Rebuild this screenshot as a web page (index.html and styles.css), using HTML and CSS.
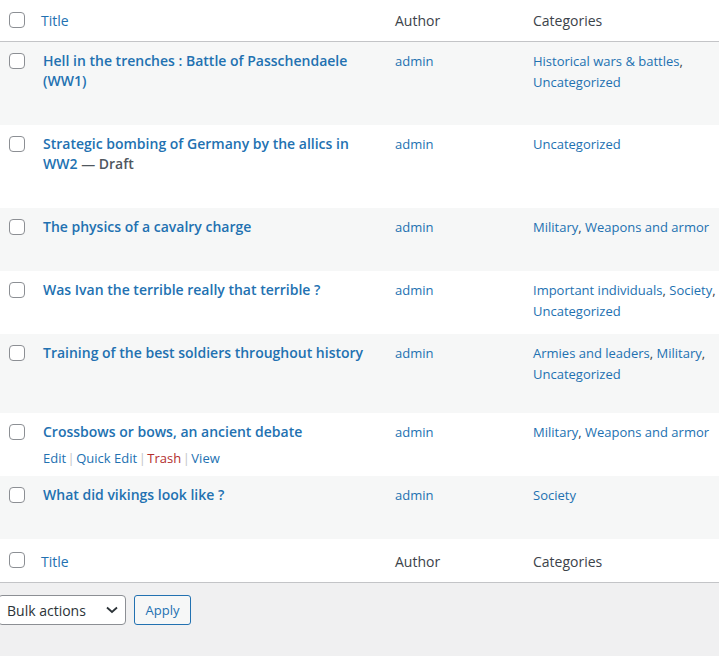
FILE: index.html
```html
<!DOCTYPE html>
<html lang="en">
<head>
<meta charset="utf-8">
<title>Posts</title>
<link rel="stylesheet" href="styles.css">
</head>
<body>
<div class="page">
  <table class="posts">
    <colgroup>
      <col class="col-check">
      <col class="col-title">
      <col class="col-author">
      <col class="col-cats">
    </colgroup>
    <thead>
      <tr class="head-row">
        <td class="check"><span class="cb"></span></td>
        <th class="sortable"><a href="#">Title</a></th>
        <th>Author</th>
        <th>Categories</th>
      </tr>
    </thead>
    <tbody>
      <tr class="alt">
        <td class="check"><span class="cb"></span></td>
        <td class="title-cell"><strong class="row-title">Hell in the trenches : Battle of Passchendaele (WW1)</strong><div class="row-actions hidden">Edit | Quick Edit | Trash | View</div></td>
        <td><a href="#">admin</a></td>
        <td><a href="#">Historical wars &amp; battles</a>, <a href="#">Uncategorized</a></td>
      </tr>
      <tr>
        <td class="check"><span class="cb"></span></td>
        <td class="title-cell"><strong class="row-title">Strategic bombing of Germany by the allics in WW2</strong> <span class="state">— Draft</span><div class="row-actions hidden">Edit | Quick Edit | Trash | Preview</div></td>
        <td><a href="#">admin</a></td>
        <td><a href="#">Uncategorized</a></td>
      </tr>
      <tr class="alt">
        <td class="check"><span class="cb"></span></td>
        <td class="title-cell"><strong class="row-title">The physics of a cavalry charge</strong><div class="row-actions hidden">Edit | Quick Edit | Trash | View</div></td>
        <td><a href="#">admin</a></td>
        <td><a href="#">Military</a>, <a href="#">Weapons and armor</a></td>
      </tr>
      <tr>
        <td class="check"><span class="cb"></span></td>
        <td class="title-cell"><strong class="row-title">Was Ivan the terrible really that terrible ?</strong><div class="row-actions hidden">Edit | Quick Edit | Trash | View</div></td>
        <td><a href="#">admin</a></td>
        <td><a href="#">Important individuals</a>, <a href="#">Society</a>, <a href="#">Uncategorized</a></td>
      </tr>
      <tr class="alt">
        <td class="check"><span class="cb"></span></td>
        <td class="title-cell"><strong class="row-title">Training of the best soldiers throughout history</strong><div class="row-actions hidden tall">Edit | Quick Edit | Trash | View</div></td>
        <td><a href="#">admin</a></td>
        <td><a href="#">Armies and leaders</a>, <a href="#">Military</a>, <a href="#">Uncategorized</a></td>
      </tr>
      <tr>
        <td class="check"><span class="cb"></span></td>
        <td class="title-cell"><strong class="row-title">Crossbows or bows, an ancient debate</strong><div class="row-actions"><a href="#">Edit</a><span class="sep">|</span><a href="#">Quick Edit</a><span class="sep">|</span><a href="#" class="trash">Trash</a><span class="sep">|</span><a href="#">View</a></div></td>
        <td><a href="#">admin</a></td>
        <td><a href="#">Military</a>, <a href="#">Weapons and armor</a></td>
      </tr>
      <tr class="alt">
        <td class="check"><span class="cb"></span></td>
        <td class="title-cell"><strong class="row-title">What did vikings look like ?</strong><div class="row-actions hidden">Edit | Quick Edit | Trash | View</div></td>
        <td><a href="#">admin</a></td>
        <td><a href="#">Society</a></td>
      </tr>
    </tbody>
    <tfoot>
      <tr class="foot-row">
        <td class="check"><span class="cb"></span></td>
        <th class="sortable"><a href="#">Title</a></th>
        <th>Author</th>
        <th>Categories</th>
      </tr>
    </tfoot>
  </table>
  <div class="tablenav">
    <div class="select">
      <span>Bulk actions</span>
      <svg class="chev" width="12" height="8" viewBox="0 0 12 8"><path d="M1 1.5 L6 6 L11 1.5" fill="none" stroke="#2c3338" stroke-width="1.8"/></svg>
    </div>
    <button class="apply">Apply</button>
  </div>
</div>
</body>
</html>
```

FILE: styles.css
```css
html, body {
  margin: 0;
  padding: 0;
}
body {
  background: #f0f0f1;
  font-family: "Open Sans", "Noto Sans", sans-serif;
  color: #3c434a;
  width: 719px;
  height: 656px;
  overflow: hidden;
}
a {
  color: #2271b1;
  text-decoration: none;
}
.posts {
  border-collapse: collapse;
  table-layout: fixed;
  width: 733px;
  background: #fff;
  font-size: 13px;
}
.col-check { width: 33px; }
.col-title { width: 352px; }
.col-author { width: 138px; }
.col-cats { width: 210px; }

.head-row,
.foot-row {
  border-bottom: 1px solid #c3c4c7;
}
.head-row th, .foot-row th {
  text-align: left;
  font-weight: 400;
  font-size: 14px;
  line-height: 25px;
  padding: 8px 10px;
  color: #3c434a;
}
.foot-row th {
  padding: 10px 10px 8px;
}
.sortable a {
  margin-left: -2px;
}
.head-row .check { padding: 12px 0 0 9px; }
.foot-row .check { padding: 13px 0 0 9px; }
td.check {
  vertical-align: top;
}

tbody td {
  vertical-align: top;
  padding: 9px 10px 8px;
  line-height: 21px;
}
tbody td.check {
  padding: 11px 0 0 9px;
}
tbody tr { background: #fff; }
tbody tr.alt { background: #f6f7f7; }

.cb {
  display: block;
  width: 14px;
  height: 14px;
  border: 1px solid #8c8f94;
  border-radius: 4px;
  background: #fff;
}
.title-cell {
  line-height: 20px;
  font-size: 14px;
}
.row-title {
  font-weight: 600;
  color: #2271b1;
}
.state {
  font-weight: 600;
  color: #50575e;
}
.row-actions {
  font-size: 13px;
  line-height: 20px;
  padding-top: 6px;
  white-space: nowrap;
}
.row-actions.hidden {
  visibility: hidden;
}
.row-actions.tall {
  padding-bottom: 16px;
}
.sep {
  color: #c3c4c7;
  margin: 0 1.5px;
}
.trash { color: #b32d2e; }

.tablenav {
  display: flex;
  align-items: center;
  gap: 8px;
  margin-top: 12px;
  margin-left: -2px;
}
.select {
  box-sizing: border-box;
  width: 128px;
  height: 30px;
  border: 1px solid #8c8f94;
  border-radius: 4px;
  background: #fff;
  display: flex;
  align-items: center;
  justify-content: space-between;
  padding: 0 7px 0 8px;
  font-size: 14px;
  color: #2c3338;
}
.apply {
  box-sizing: border-box;
  width: 57px;
  height: 30px;
  border: 1px solid #2271b1;
  border-radius: 3px;
  background: #f6f7f7;
  color: #2271b1;
  font-family: inherit;
  font-size: 13px;
  padding: 0;
}
```
